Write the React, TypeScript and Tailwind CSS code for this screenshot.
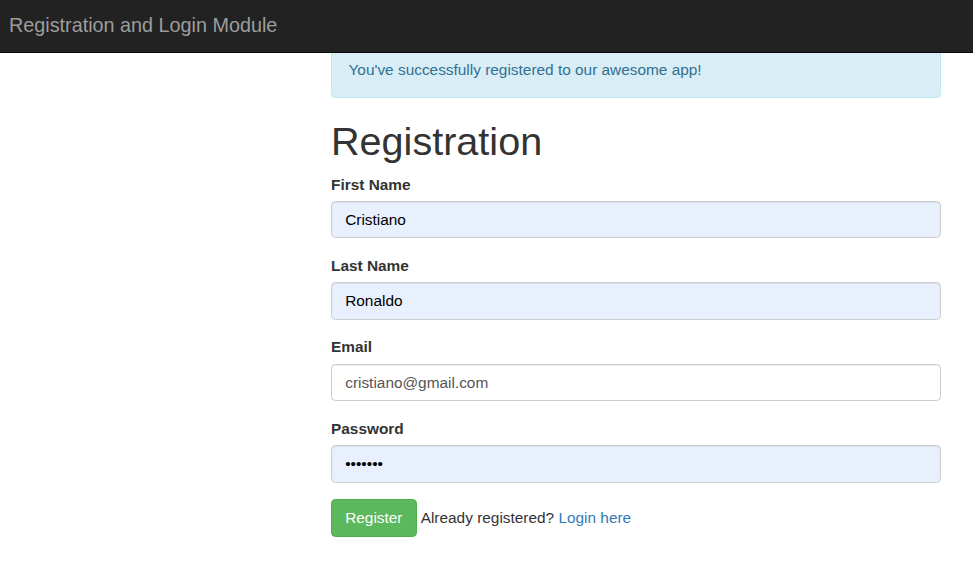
import React from "react";

const font = { fontFamily: '"Liberation Sans", Arial, sans-serif' };

type FieldProps = {
  label: string;
  value: string;
  type?: string;
  autofilled?: boolean;
};

const Field: React.FC<FieldProps> = ({ label, value, type = "text", autofilled = true }) => {
  return (
    <div className="mb-[16.5px]">
      <label className="block mb-[5.5px] text-[15.4px] leading-[22px] font-bold text-[#333333]">
        {label}
      </label>
      <input
        type={type}
        value={value}
        readOnly
        className={`block w-full h-[37.4px] px-[13.2px] py-[6.6px] text-[15.4px] leading-[22px] rounded-[4.4px] border border-[#cccccc] shadow-[inset_0_1px_1px_rgba(0,0,0,0.075)] outline-none ${
          autofilled ? "bg-[#e8f0fe] text-black" : "bg-white text-[#555555]"
        }`}
        style={font}
      />
    </div>
  );
};

export default function App() {
  return (
    <div className="min-h-[567px] bg-white" style={font}>
      <nav className="relative z-10 h-[53px] bg-[#222222] border-b border-[#080808] flex items-center px-[9px]">
        <span className="text-[19.8px] leading-[22px] text-[#9d9d9d] pb-[3px]">
          Registration and Login Module
        </span>
      </nav>

      <div className="pl-[331px] pr-[32px] -mt-[12px]">
        <div className="w-[610px]">
          <div className="mb-[22px] px-[16.5px] py-[16.5px] rounded-[4.4px] border border-[#bce8f1] bg-[#d9edf7] text-[#31708f] text-[15.4px] leading-[22px]">
            You've successfully registered to our awesome app!
          </div>

          <h1 className="text-[39.6px] leading-[1.1] text-[#333333] font-normal mb-[10px]">
            Registration
          </h1>

          <form onSubmit={(e) => e.preventDefault()}>
            <Field label="First Name" value="Cristiano" />
            <Field label="Last Name" value="Ronaldo" />
            <Field label="Email" value="cristiano@gmail.com" autofilled={false} />
            <Field label="Password" value="1234567" type="password" />

            <div className="flex items-center text-[15.4px] leading-[22px] text-[#333333]">
              <button
                type="submit"
                className="h-[37.4px] px-[13.2px] rounded-[4.4px] border border-[#4cae4c] bg-[#5cb85c] text-white text-[15.4px] leading-[22px]"
                style={font}
              >
                Register
              </button>
              <span className="ml-[4px]">
                Already registered?{" "}
                <a href="#" className="text-[#337ab7]">
                  Login here
                </a>
              </span>
            </div>
          </form>
        </div>
      </div>
    </div>
  );
}
